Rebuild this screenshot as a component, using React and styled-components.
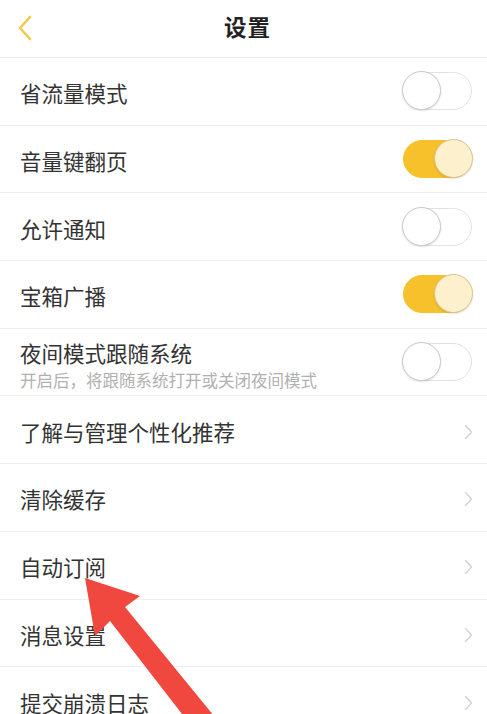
import React from 'react'
import styled, { createGlobalStyle } from 'styled-components'

const Global = createGlobalStyle`
  html, body {
    margin: 0;
    padding: 0;
    background: #fff;
  }
  body {
    font-family: "Noto Sans CJK SC", "Noto Sans", sans-serif;
    color: #333;
  }
`

const items = [
  { label: '省流量模式', type: 'switch', on: false },
  { label: '音量键翻页', type: 'switch', on: true },
  { label: '允许通知', type: 'switch', on: false },
  { label: '宝箱广播', type: 'switch', on: true },
  { label: '夜间模式跟随系统', sub: '开启后，将跟随系统打开或关闭夜间模式', type: 'switch', on: false },
  { label: '了解与管理个性化推荐', type: 'link' },
  { label: '清除缓存', type: 'link' },
  { label: '自动订阅', type: 'link' },
  { label: '消息设置', type: 'link' },
  { label: '提交崩溃日志', type: 'link' },
]

export default () => {
  return (
    <Page>
      <Global />
      <Header>
        <Back>
          <svg width="16" height="26" viewBox="0 0 16 26">
            <polyline points="13,2 3,13 13,24" fill="none" stroke="#f2c94c" strokeWidth="2.6" strokeLinecap="round" strokeLinejoin="round" />
          </svg>
        </Back>
        <Title>设置</Title>
      </Header>
      <List>
        {items.map((it) => (
          <Row key={it.label}>
            <Texts>
              <Label>{it.label}</Label>
              {it.sub && <Sub>{it.sub}</Sub>}
            </Texts>
            {it.type === 'switch' ? (
              <Switch $on={it.on}>
                <Knob $on={it.on} />
              </Switch>
            ) : (
              <Chevron>
                <svg width="9" height="16" viewBox="0 0 9 16">
                  <polyline points="1.5,1.5 7.5,8 1.5,14.5" fill="none" stroke="#d2d2d2" strokeWidth="1.4" strokeLinecap="round" strokeLinejoin="round" />
                </svg>
              </Chevron>
            )}
          </Row>
        ))}
      </List>
      <Arrow viewBox="0 0 487 714" width="487" height="714">
        <polygon
          points="85,578 140,596 125,607 214,716 196,732 110,621 95,636"
          fill="#f0473f"
        />
      </Arrow>
    </Page>
  )
}

const Page = styled.div`
  position: relative;
  width: 487px;
  height: 714px;
  overflow: hidden;
  background: #fff;
`

const Header = styled.header`
  height: 58px;
  box-sizing: border-box;
  border-bottom: 1px solid #ececec;
  display: flex;
  align-items: center;
  justify-content: center;
  padding: 0 0 6px 8px;
  position: relative;
`

const Back = styled.div`
  position: absolute;
  left: 17px;
  top: 15px;
  display: flex;
`

const Title = styled.h1`
  margin: 0;
  font-size: 22.5px;
  font-weight: 600;
  color: #222;
  letter-spacing: 1px;
`

const List = styled.div`
  display: flex;
  flex-direction: column;
`

const Row = styled.div`
  height: 67.7px;
  box-sizing: border-box;
  border-bottom: 1px solid #efefef;
  display: flex;
  align-items: center;
  justify-content: space-between;
  padding: 4px 14px 0 20px;
`

const Texts = styled.div`
  display: flex;
  flex-direction: column;
`

const Label = styled.div`
  font-size: 21.5px;
  line-height: 30px;
  color: #333;
`

const Sub = styled.div`
  font-size: 16.5px;
  line-height: 22px;
  color: #b0b0b0;
  margin-top: 1px;
`

const Switch = styled.div`
  width: 69px;
  height: 38px;
  margin-right: 1px;
  margin-top: -4px;
  box-sizing: border-box;
  border-radius: 19px;
  position: relative;
  background: ${(p) => (p.$on ? '#f6c12a' : '#fff')};
  border: 1.5px solid ${(p) => (p.$on ? '#f6c12a' : '#e2e2e2')};
`

const Knob = styled.div`
  position: absolute;
  top: -2px;
  ${(p) => (p.$on ? 'right: -2px;' : 'left: -2px;')}
  width: 39px;
  height: 39px;
  box-sizing: border-box;
  border-radius: 50%;
  background: ${(p) => (p.$on ? '#fdf0cc' : '#fff')};
  border: 1.5px solid ${(p) => (p.$on ? '#d9c38a' : '#c8c8c8')};
  box-shadow: 0 1px 2px rgba(0, 0, 0, 0.12);
`

const Chevron = styled.div`
  display: flex;
  margin-right: 0;
`

const Arrow = styled.svg`
  position: absolute;
  left: 0;
  top: 0;
  pointer-events: none;
`
